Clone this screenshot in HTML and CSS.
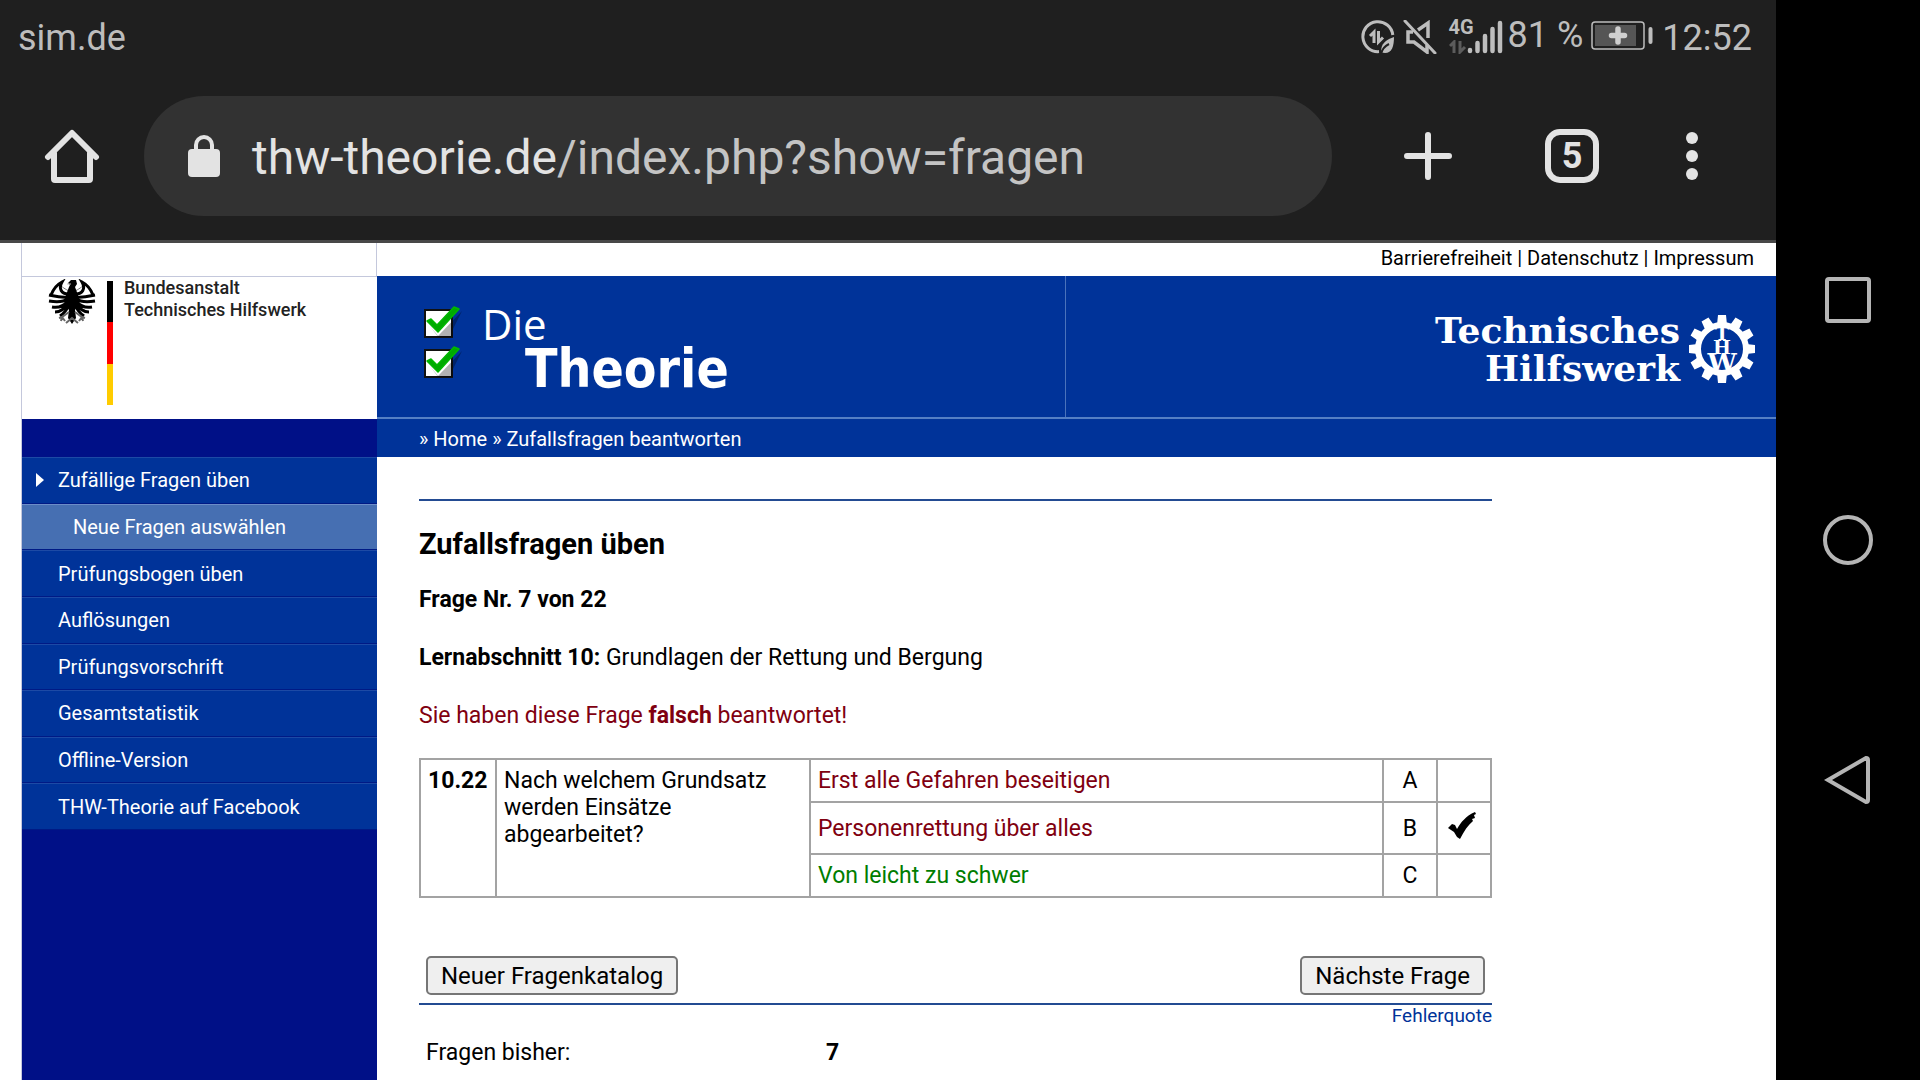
FILE: index.html
```html
<!DOCTYPE html>
<html lang="de">
<head>
<meta charset="utf-8">
<meta name="viewport" content="width=device-width, initial-scale=1">
<title>Die Theorie – Zufallsfragen üben</title>
<link rel="stylesheet" href="styles.css">
</head>
<body>
<div class="screen">
  <div class="status">
    <span class="carrier">sim.de</span>
    <div class="indicators">
      <svg class="ind-saver" width="34" height="34" viewBox="0 0 34 34" fill="none" stroke="#bdbdbd">
        <path d="M18 31.6A15 15 0 1 1 31.8 15" stroke-width="3"/>
        <path d="M9 16l4-4v11M17.5 11v11l4.500-4.500" stroke-width="3"/>
        <path d="M33 17c0 9-2 16-9 16-3 0-4-1-4-1 0-8 4-12 13-15z" fill="#bdbdbd" stroke="none"/>
        <path d="M20 34c1-5 4-8 8-10" stroke="#1f1f1f" stroke-width="2"/>
      </svg>
      <svg class="ind-mute" width="34" height="34" viewBox="0 0 34 34" fill="none" stroke="#bdbdbd" stroke-width="3.500">
        <path d="M15 10l10-7v15M7 12H5v10h6l13 10v-7M5 12h5"/>
        <path d="M2 1l30 32" stroke-width="3" stroke-linecap="round"/>
      </svg>
      <div class="network">
        <span>4G</span>
        <svg width="18" height="14" viewBox="0 0 18 14" fill="none" stroke="#5c5c5c" stroke-width="3"><path d="M1 6l4-4v11M11 1v11l5-5"/></svg>
      </div>
      <svg class="ind-signal" width="36" height="34" viewBox="0 0 36 34" stroke="#bdbdbd" stroke-width="4.500" stroke-linecap="round"><path d="M3 30v1M10.500 23v8M18 16v15M25.500 9v22M33 3v28"/></svg>
      <span class="percent">81 %</span>
      <svg class="ind-battery" width="62" height="30" viewBox="0 0 62 30">
        <rect x="1" y="1" width="52" height="27" rx="3" fill="none" stroke="#bdbdbd" stroke-width="1.500"/>
        <rect x="4" y="4" width="41" height="21" fill="#555"/>
        <path d="M27 8v13M20.500 14.500h13" stroke="#cfcfcf" stroke-width="5.500" stroke-linecap="round"/>
        <path d="M59.500 8v13" stroke="#bdbdbd" stroke-width="4" stroke-linecap="round"/>
      </svg>
      <time class="clock">12:52</time>
    </div>
  </div>

  <div class="toolbar">
    <button class="tool" aria-label="Startseite">
      <svg width="56" height="56" viewBox="0 0 56 56" fill="none" stroke="#e3e3e3" stroke-width="6" stroke-linejoin="round" stroke-linecap="round"><path d="M4 29L28 5l24 24M10 25v26a1 1 0 0 0 1 1h34a1 1 0 0 0 1-1V25"/></svg>
    </button>
    <button class="omnibox">
      <svg width="32" height="42" viewBox="0 0 32 42"><rect y="14" width="32" height="28" rx="4" fill="#e3e3e3"/><path d="M8 15v-5a8 8 0 0 1 16 0v5" fill="none" stroke="#e3e3e3" stroke-width="4"/></svg>
      <span class="url"><span class="host">thw-theorie.de</span>/index.php?show=fragen</span>
    </button>
    <button class="tool" aria-label="Neuer Tab">
      <svg width="48" height="48" viewBox="0 0 48 48" stroke="#e3e3e3" stroke-width="6" stroke-linecap="round"><path d="M24 3v42M3 24h42"/></svg>
    </button>
    <button class="tool" aria-label="5 Tabs"><span class="tabs">5</span></button>
    <button class="tool tool-menu" aria-label="Menü">
      <svg width="12" height="48" viewBox="0 0 12 48" fill="#e3e3e3"><circle cx="6" cy="6" r="6"/><circle cx="6" cy="24" r="6"/><circle cx="6" cy="42" r="6"/></svg>
    </button>
  </div>

  <div class="site">
    <aside class="sidebar">
      <div class="side-top"></div>
      <div class="agency">
        <svg class="eagle" width="48" height="46" viewBox="0 0 48 46" fill="none" stroke="#000">
          <path d="M21 12C15 9 9 5 14 2M27 12c6-3 12-7 7-10" stroke="#777" stroke-width="1"/>
          <path d="M20 15C14 15 10 10 14 3 8 6 5 11 3 16M28 15c6 0 10-5 6-12 6 3 9 8 11 13" stroke-width="3"/>
          <path d="M20 18C13 19 6 17 1 16M20 20C14 24 7 23 1 22M20 22c-5 6-11 7-16 6M20 24c-4 7-9 9-13 9M21 26c-3 7-6 9-9 11M28 18c7 1 14-1 19-2M28 20c6 4 13 3 19 2M28 22c5 6 11 7 16 6M28 24c4 7 9 9 13 9M27 26c3 7 6 9 9 11" stroke-width="3"/>
          <path d="M20 4l3-3h5l1 4-2 3 3 8c1 7-1 12-3 15l1 8-4 6-4-6 1-8c-2-3-4-8-3-15l3-8 1-2z" fill="#000" stroke="none"/>
          <path d="M21 33l-7 5-3 1m3-1l-1 4m1-4l3 4M27 33l7 5 3 1m-3-1l1 4m-1-4l-3 4M18 44l6-5 6 5" stroke="#666" stroke-width="2"/>
          <path d="M19 5h4" stroke="#bbb"/>
        </svg>
        <div class="flag"><i class="flag-black"></i><i class="flag-red"></i><i class="flag-gold"></i></div>
        <p class="agency-name">Bundesanstalt<br>Technisches Hilfswerk</p>
      </div>
      <nav class="menu">
        <a class="current" href="#zufall"><svg width="8" height="14" viewBox="0 0 8 14" fill="#fff"><path d="M0 0l8 7-8 7z"/></svg>Zufällige Fragen üben</a>
        <a class="sub" href="#neu">Neue Fragen auswählen</a>
        <a href="#bogen">Prüfungsbogen üben</a>
        <a href="#aufloesungen">Auflösungen</a>
        <a href="#vorschrift">Prüfungsvorschrift</a>
        <a href="#statistik">Gesamtstatistik</a>
        <a href="#offline">Offline-Version</a>
        <a href="#facebook">THW-Theorie auf Facebook</a>
      </nav>
    </aside>

    <div class="column">
      <div class="meta"><a href="#barrierefreiheit">Barrierefreiheit</a> | <a href="#datenschutz">Datenschutz</a> | <a href="#impressum">Impressum</a></div>
      <header class="banner">
        <div class="product">
          <svg class="ticks" width="40" height="74" viewBox="0 0 40 74">
            <defs><g id="tick">
              <rect x="1" y="4" width="27" height="27" fill="#fff" stroke="#111" stroke-width="2"/>
              <path d="M6 20l8 10L38 5l-9 18v8H14z" fill="#000" opacity=".3"/>
              <path d="M3 15l4-2 6 6L30 1l5 2-21 23z" fill="#0a0" stroke="#00b800" stroke-width="1.500" stroke-linejoin="round"/>
            </g></defs>
            <use href="#tick"/><use href="#tick" y="40"/>
          </svg>
          <div class="product-name"><span class="name-die">Die</span><span class="name-theorie">Theorie</span></div>
        </div>
        <div class="thw">
          <span class="thw-name">Technisches<br>Hilfswerk</span>
          <svg class="thw-emblem" width="66" height="68" viewBox="-33 -34 66 68">
            <g fill="#fff">
              <g id="cogs"><path id="cog" d="M-5-24L-4-34H4L5-24zM-5 24L-4 34H4L5 24z"/><use href="#cog" transform="rotate(30)"/><use href="#cog" transform="rotate(60)"/></g>
              <use href="#cogs" transform="rotate(90)"/>
            </g>
            <circle r="24" fill="#039" stroke="#fff" stroke-width="6"/>
            <g font-family="DejaVu Serif" font-weight="bold" text-anchor="middle" fill="#fff">
              <text y="23" font-size="26">W</text>
              <text y="5" font-size="19">H</text>
              <text y="-9" font-size="19">T</text>
            </g>
          </svg>
        </div>
      </header>
      <nav class="crumbs">» <a href="#home">Home</a> » <a href="#zufall">Zufallsfragen beantworten</a></nav>

      <main class="content">
        <hr>
        <h1>Zufallsfragen üben</h1>
        <p><strong>Frage Nr. 7 von 22</strong></p>
        <p><strong>Lernabschnitt 10:</strong> Grundlagen der Rettung und Bergung</p>
        <p class="wrong">Sie haben diese Frage <strong>falsch</strong> beantwortet!</p>
        <table class="question">
          <colgroup><col class="c-num"><col class="c-text"><col><col class="c-mark"><col class="c-mark"></colgroup>
          <tr><th rowspan="3" scope="rowgroup">10.22</th><td rowspan="3">Nach welchem Grundsatz werden Einsätze abgearbeitet?</td><td class="wrong">Erst alle Gefahren beseitigen</td><td class="letter">A</td><td></td></tr>
          <tr class="chosen"><td class="wrong">Personenrettung über alles</td><td class="letter">B</td><td class="mark"><svg width="28" height="28" viewBox="0 0 28 28" role="img" aria-label="Angekreuzt"><path d="M0 16l4-4 3 1 2 4c4-7 9-13 18-17l1 2-2 1 1 3-3 1 1 2C20 13 16 19 12 27l-3-2-3-5z"/></svg></td></tr>
          <tr><td class="right">Von leicht zu schwer</td><td class="letter">C</td><td></td></tr>
        </table>
        <div class="actions"><button>Neuer Fragenkatalog</button><button class="next">Nächste Frage</button></div>
        <hr>
        <a class="rate" href="#fehlerquote">Fehlerquote</a>
        <table class="stats"><tr><th scope="row">Fragen bisher:</th><td>7</td></tr></table>
      </main>
    </div>
  </div>
</div>

<nav class="system">
  <button aria-label="Übersicht"><svg width="50" height="50" viewBox="0 0 50 50"><rect x="4" y="4" width="42" height="42" rx="2"/></svg></button>
  <button aria-label="Startbildschirm"><svg width="50" height="50" viewBox="0 0 50 50"><circle cx="25" cy="25" r="23"/></svg></button>
  <button aria-label="Zurück"><svg width="50" height="50" viewBox="0 0 50 50"><path d="M5 25L43 3q2 0 2 2v40q0 2-2 2z"/></svg></button>
</nav>
</body>
</html>
```
FILE: styles.css
```css
* { box-sizing: border-box; }

body {
  margin: 0;
  display: flex;
  height: 100vh;
  overflow: hidden;
  background: #000;
  color: #000;
  font: 23px/28px Roboto, sans-serif;
}

a { color: inherit; text-decoration: none; }
button { font: inherit; color: inherit; }
svg { display: block; flex: none; }

.screen {
  flex: 1;
  min-width: 0;
  display: flex;
  flex-direction: column;
  background: #fff;
}

/* Android status bar */
.status {
  display: flex;
  justify-content: space-between;
  height: 72px;
  padding: 15px 24px 0 18px;
  background: #1f1f1f;
  color: #bdbdbd;
  font-size: 36px;
  line-height: 46px;
}
.indicators { display: flex; align-items: flex-start; }
.ind-saver, .ind-mute, .ind-signal { margin-top: 5px; }
.ind-mute { margin-left: 8px; }
.network {
  display: flex;
  flex-direction: column;
  gap: 3px;
  width: 18px;
  margin: 2px 0 0 12px;
  font-size: 20px;
  font-weight: 700;
  line-height: 20px;
}
.percent { margin-left: 5px; line-height: 40px; }
.ind-battery { margin: 6px 9px 0 8px; }

/* Browser toolbar */
.toolbar {
  display: flex;
  align-items: center;
  height: 171px;
  padding-right: 36px;
  background: #1f1f1f;
  border-bottom: 3px solid #484848;
}
.toolbar button { border: 0; background: none; }
.tool {
  display: flex;
  align-items: center;
  justify-content: center;
  width: 144px;
  height: 96px;
  padding: 0;
}
.tool-menu { width: 96px; }
.toolbar .omnibox {
  flex: 1;
  min-width: 0;
  display: flex;
  align-items: center;
  gap: 32px;
  height: 120px;
  margin-right: 24px;
  padding: 0 44px;
  border-radius: 60px;
  background: #323232;
  color: #c4c4c4;
  font-size: 48px;
  line-height: 60px;
}
.url { padding-top: 3px; }
.host { color: #e3e3e3; }
.tabs {
  width: 54px;
  height: 54px;
  border: 6px solid #e3e3e3;
  border-radius: 15px;
  color: #e3e3e3;
  font-size: 36px;
  font-weight: 700;
  line-height: 42px;
}

/* Website */
.site {
  flex: 1;
  min-height: 0;
  display: grid;
  grid-template-columns: 356px 1fr;
  margin-left: 21px;
}
.sidebar {
  background: #001087;
  border-left: 1px solid #c4c8dc;
  color: #fff;
}
.side-top {
  height: 34px;
  background: #fff;
  border-right: 1px solid #c4c8dc;
  border-bottom: 1px solid #c4c8dc;
}
.agency {
  display: flex;
  align-items: flex-start;
  height: 142px;
  margin-bottom: 38px;
  padding: 2px 0 0 26px;
  background: #fff;
  color: #222;
}
.flag { display: grid; width: 6px; height: 124px; margin: 2px 11px 0; }
.flag-black { background: #000; }
.flag-red { background: #f00; }
.flag-gold { background: #fc0; }
.agency-name { margin: -2px 0 0; font-size: 18px; font-weight: 500; line-height: 22px; }

.menu {
  display: grid;
  grid-auto-rows: 1fr;
  min-height: 373px;
  font-size: 20px;
  line-height: 24px;
}
.menu a {
  display: flex;
  align-items: center;
  padding-left: 36px;
  background: #039;
  border-top: 1px solid #1d4aa5;
  border-bottom: 1px solid #001a85;
}
.menu .current { padding-left: 14px; gap: 14px; }
.menu .sub { padding-left: 51px; background: #466fb2; border-top-color: #6c8dc8; }

.meta {
  height: 33px;
  padding: 3px 22px 0 0;
  font-size: 20px;
  line-height: 24px;
  text-align: right;
}
.banner {
  display: grid;
  grid-template-columns: 689px 1fr;
  height: 143px;
  background: #039;
  border-bottom: 2px solid #557fc4;
  color: #fff;
}
.product {
  display: flex;
  padding: 30px 0 0 47px;
  border-right: 1px solid #4a72bb;
}
.product-name {
  display: flex;
  flex-direction: column;
  margin-left: 18px;
}
.name-die {
  font-family: "Open Sans", sans-serif;
  font-size: 42px;
  line-height: 36px;
}
.name-theorie {
  margin-left: 43px;
  font-family: "DejaVu Sans Condensed", "DejaVu Sans", sans-serif;
  font-size: 53px;
  font-weight: 700;
  line-height: 54px;
}
.thw {
  display: flex;
  justify-content: flex-end;
  gap: 9px;
  padding: 35px 21px 0 0;
}
.thw-name {
  font-family: "DejaVu Serif", serif;
  font-size: 36px;
  font-weight: 700;
  line-height: 38px;
  text-align: right;
}
.thw-emblem { margin-top: 4px; }
.crumbs {
  height: 38px;
  padding: 8px 42px 0;
  background: #039;
  color: #fff;
  font-size: 20px;
  line-height: 24px;
}

.content { max-width: 1157px; padding: 42px 42px 0; }
hr { height: 2px; margin: 0; border: 0; background: #234b92; }
h1 { margin: 25px 0 24px; font-size: 29px; line-height: 36px; }
p { margin: 0 0 30px; }
p.wrong { margin-bottom: 28px; }
strong { font-weight: 700; }
.wrong { color: #800010; }
.right { color: #007d00; }

.question {
  width: 100%;
  table-layout: fixed;
  border-collapse: collapse;
  line-height: 27px;
}
.question th, .question td {
  padding: 7px;
  border: 2px solid #a3a3a3;
  text-align: left;
  vertical-align: top;
}
.question .letter { text-align: center; }
.question .chosen td { height: 52px; vertical-align: middle; }
.question .mark { padding: 0 10px 4px; }
.c-num { width: 76px; }
.c-text { width: 314px; }
.c-mark { width: 54px; }

.actions {
  display: flex;
  justify-content: space-between;
  padding: 58px 7px 8px;
}
.actions button {
  height: 39px;
  padding: 0 13px;
  border: 2px solid #767676;
  border-radius: 5px;
  background: #efefef;
  font-size: 24px;
}
.rate {
  display: block;
  color: #039;
  font-size: 19px;
  line-height: 22px;
  text-align: right;
}
.stats { margin: 12px 0 0 7px; border-spacing: 0; line-height: 27px; }
.stats th { width: 400px; padding: 0; font-weight: 400; text-align: left; }
.stats td { padding: 0; font-weight: 700; }

/* Android navigation bar */
.system {
  flex: none;
  display: flex;
  flex-direction: column;
  align-items: center;
  justify-content: center;
  gap: 190px;
  width: 144px;
  background: #000;
}
.system button { padding: 0; border: 0; background: none; }
.system svg { fill: none; stroke: #b5b5b5; stroke-width: 4; }
```
